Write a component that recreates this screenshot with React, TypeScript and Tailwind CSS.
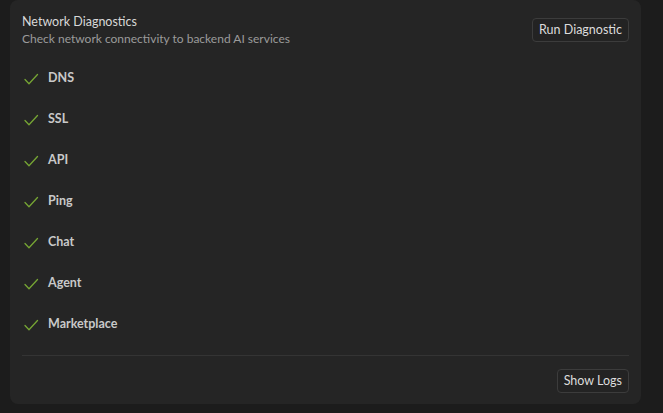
import React from "react";

const checks = ["DNS", "SSL", "API", "Ping", "Chat", "Agent", "Marketplace"];

function CheckMark() {
  return (
    <svg width="16" height="14" viewBox="0 0 16 14" fill="none" className="shrink-0">
      <path d="M2 7.5 6 11.8 14.5 2.5" stroke="#76a534" strokeWidth="1.3" strokeLinecap="round" strokeLinejoin="round" />
    </svg>
  );
}

export default function App() {
  return (
    <div
      className="min-h-[413px] w-full bg-[#1c1c1c] pl-[10px] pr-[22px]"
      style={{ fontFamily: 'Lato, "Noto Sans", sans-serif' }}
    >
      <div className="flex flex-col rounded-lg bg-[#252525] px-3 pt-[13px] pb-[11px]">
        {/* Header */}
        <div className="flex items-center justify-between">
          <div className="flex flex-col">
            <h2 className="text-[12.5px] leading-[17px] text-[#d8d8d8]">Network Diagnostics</h2>
            <p className="text-[12px] leading-[17px] text-[#9b9b9b]">
              Check network connectivity to backend AI services
            </p>
          </div>
          <button className="h-6 rounded border border-[#3c3c3c] bg-[#232323] px-[6px] text-[12.5px] text-[#dcdcdc]">
            Run Diagnostic
          </button>
        </div>

        {/* Checks */}
        <ul className="mt-[11px] flex flex-col">
          {checks.map((name) => (
            <li key={name} className="flex h-[41px] items-center gap-[9px] pl-[1px]">
              <CheckMark />
              <span className="text-[12.5px] font-bold text-[#c9c9c9]">{name}</span>
            </li>
          ))}
        </ul>

        <div className="mt-[10px] h-px bg-[#343434]" />

        <div className="mt-[13px] flex justify-end">
          <button className="h-6 rounded border border-[#3c3c3c] bg-[#232323] px-[6px] text-[12.5px] text-[#dcdcdc]">
            Show Logs
          </button>
        </div>
      </div>
    </div>
  );
}
